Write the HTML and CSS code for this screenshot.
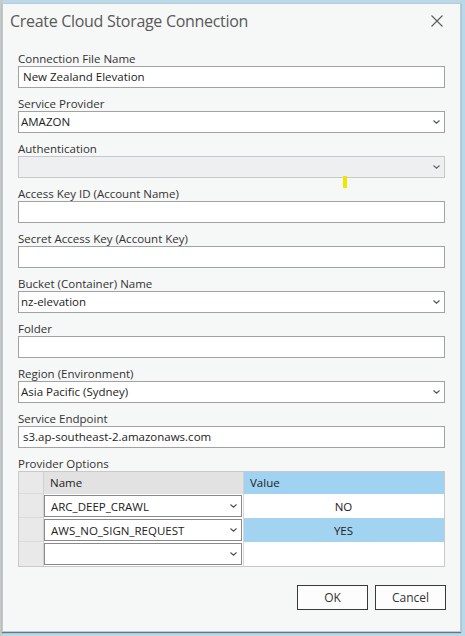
FILE: index.html
```html
<!DOCTYPE html>
<html>
<head>
<meta charset="utf-8">
<link rel="stylesheet" href="styles.css">
</head>
<body>
<div class="dialog">
  <div class="titlebar">
    <span class="title">Create Cloud Storage Connection</span>
    <svg class="close" width="12" height="12" viewBox="0 0 12 12"><path d="M0.5 0.5 L11.5 11.5 M11.5 0.5 L0.5 11.5" stroke="#5a5a5a" stroke-width="1.1" fill="none"/></svg>
  </div>
  <div class="form">
    <div class="field">
      <div class="label">Connection File Name</div>
      <div class="box text">New Zealand Elevation</div>
    </div>
    <div class="field">
      <div class="label">Service Provider</div>
      <div class="box select"><span>AMAZON</span><svg class="chev" width="7" height="4" viewBox="0 0 7 4"><path d="M0.5 0.5 L3.5 3.2 L6.5 0.5" stroke="#555" stroke-width="1.2" fill="none"/></svg></div>
    </div>
    <div class="field">
      <div class="label">Authentication</div>
      <div class="box select disabled"><span></span><svg class="chev" width="7" height="4" viewBox="0 0 7 4"><path d="M0.5 0.5 L3.5 3.2 L6.5 0.5" stroke="#666" stroke-width="1.2" fill="none"/></svg></div>
    </div>
    <div class="field">
      <div class="label">Access Key ID (Account Name)</div>
      <div class="box text"></div>
    </div>
    <div class="field">
      <div class="label">Secret Access Key (Account Key)</div>
      <div class="box text"></div>
    </div>
    <div class="field">
      <div class="label">Bucket (Container) Name</div>
      <div class="box select"><span>nz-elevation</span><svg class="chev" width="7" height="4" viewBox="0 0 7 4"><path d="M0.5 0.5 L3.5 3.2 L6.5 0.5" stroke="#555" stroke-width="1.2" fill="none"/></svg></div>
    </div>
    <div class="field">
      <div class="label">Folder</div>
      <div class="box text"></div>
    </div>
    <div class="field">
      <div class="label">Region (Environment)</div>
      <div class="box select"><span>Asia Pacific (Sydney)</span><svg class="chev" width="7" height="4" viewBox="0 0 7 4"><path d="M0.5 0.5 L3.5 3.2 L6.5 0.5" stroke="#555" stroke-width="1.2" fill="none"/></svg></div>
    </div>
    <div class="field">
      <div class="label">Service Endpoint</div>
      <div class="box text">s3.ap-southeast-2.amazonaws.com</div>
    </div>
    <div class="field">
      <div class="label">Provider Options</div>
      <div class="grid">
        <div class="rh corner"></div>
        <div class="hd name-hd">Name</div>
        <div class="hd value-hd">Value</div>

        <div class="rh"></div>
        <div class="cell"><div class="cellsel"><span>ARC_DEEP_CRAWL</span><svg class="chev" width="7" height="4" viewBox="0 0 7 4"><path d="M0.5 0.5 L3.5 3.2 L6.5 0.5" stroke="#555" stroke-width="1.2" fill="none"/></svg></div></div>
        <div class="cell val">NO</div>

        <div class="rh"></div>
        <div class="cell"><div class="cellsel"><span>AWS_NO_SIGN_REQUEST</span><svg class="chev" width="7" height="4" viewBox="0 0 7 4"><path d="M0.5 0.5 L3.5 3.2 L6.5 0.5" stroke="#555" stroke-width="1.2" fill="none"/></svg></div></div>
        <div class="cell val sel">YES</div>

        <div class="rh last"></div>
        <div class="cell last"><div class="cellsel"><span></span><svg class="chev" width="7" height="4" viewBox="0 0 7 4"><path d="M0.5 0.5 L3.5 3.2 L6.5 0.5" stroke="#555" stroke-width="1.2" fill="none"/></svg></div></div>
        <div class="cell val last"></div>
      </div>
    </div>
  </div>
  <div class="buttons">
    <div class="btn">OK</div>
    <div class="btn">Cancel</div>
  </div>
  <div class="marker"></div>
</div>
</body>
</html>
```

FILE: styles.css
```css
* { box-sizing: border-box; }
html, body { margin: 0; padding: 0; }
body {
  width: 465px;
  height: 636px;
  overflow: hidden;
  padding: 3px 0 0 2px;
  background: linear-gradient(90deg, #c7cdc6 0, #c7cdc6 3px, #b9d9ea 3px, #b9d9ea 100%);
  font-family: "Open Sans", "Noto Sans", sans-serif;
  color: #333;
}
.dialog {
  position: relative;
  width: 459px;
  height: 629px;
  background: #f6f7f7;
  border: 1px solid #bccbd4;
  box-shadow: 0 1px 1px rgba(0, 0, 0, 0.45);
  display: flex;
  flex-direction: column;
}
.titlebar {
  height: 47px;
  display: flex;
  align-items: flex-start;
  justify-content: space-between;
  padding: 5px 17px 0 7px;
}
.title {
  font-size: 16px;
  line-height: 24px;
  color: #595959;
  letter-spacing: -0.3px;
}
.close { margin-top: 6px; }
.form {
  display: flex;
  flex-direction: column;
  gap: 8px;
  padding: 0 15px 0 15px;
}
.field { display: flex; flex-direction: column; }
.label {
  font-size: 11.5px;
  line-height: 15px;
  color: #333;
  white-space: nowrap;
}
.box {
  height: 22px;
  border: 1px solid #a2a2a2;
  background: #fff;
  font-size: 11.5px;
  line-height: 20px;
  color: #222;
  white-space: nowrap;
}
.box.text { padding-left: 4px; }
.box.select {
  display: flex;
  align-items: center;
  justify-content: space-between;
  padding: 0 4px 0 2px;
}
.box.disabled {
  background: #eeeff0;
  border-color: #c6c8ca;
}
.chev { flex: none; }
.grid {
  display: grid;
  grid-template-columns: 25px 200px 1fr;
  grid-template-rows: 22px 24px 24px 24px;
  border: 1px solid #c9c9c9;
  font-size: 11.5px;
  color: #222;
}
.rh {
  background: #e9e9e9;
  border-bottom: 1px solid #dadada;
  border-right: 1px solid #d2d2d2;
}
.rh.corner { background: #e9e9e9; }
.rh.last { border-bottom: none; }
.hd {
  line-height: 22px;
  padding-left: 6px;
}
.name-hd { background: #e2e2e2; border-right: 1px solid #d0d0d0; }
.value-hd { background: #9fd3f1; }
.cell {
  background: #fff;
  border-right: 1px solid #d6d6d6;
  padding: 1px 1px 1px 0;
}
.cell.val {
  border-right: none;
  display: flex;
  align-items: center;
  justify-content: center;
}
.cell.sel { background: #a2d4f1; }
.cellsel {
  height: 22px;
  border: 1px solid #8a8a8a;
  background: #fff;
  display: flex;
  align-items: center;
  justify-content: space-between;
  padding: 0 4px 0 6px;
  white-space: nowrap;
}
.buttons {
  display: flex;
  justify-content: flex-end;
  gap: 7px;
  padding: 18px 14px 0 0;
}
.btn {
  width: 71px;
  height: 25px;
  border: 1px solid #3a3a3a;
  background: #fdfdfd;
  font-size: 12px;
  line-height: 23px;
  text-align: center;
  color: #333;
}
.marker {
  position: absolute;
  left: 340px;
  top: 172px;
  width: 4px;
  height: 12px;
  background: #f2e500;
}
```
